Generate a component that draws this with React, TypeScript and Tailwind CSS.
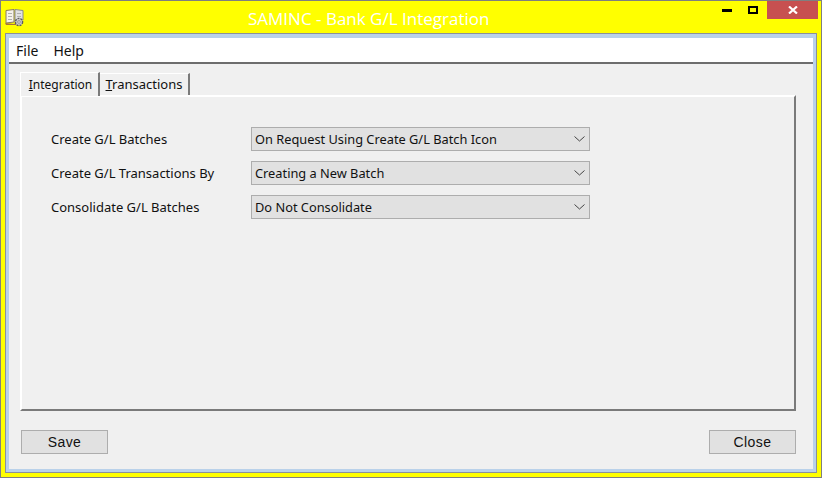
import React from "react";

function Row({ label, value }: { label: string; value: string }) {
  return (
    <div className="flex items-center h-[24px] mb-[10px]">
      <div className="w-[200px] shrink-0 pt-[2px] text-[13px] text-[#111] whitespace-nowrap">{label}</div>
      <div className="w-[339px] h-[24px] flex items-center justify-between bg-[#e1e1e1] border border-[#adadad] pl-[3px] pr-[4px] text-[12.8px] text-[#111] whitespace-nowrap">
        <span className="pt-[1px]">{value}</span>
        <svg width="11" height="6" viewBox="0 0 11 6" fill="none" stroke="#444" strokeWidth="1">
          <path d="M0.5 0.5 L5.5 5 L10.5 0.5" />
        </svg>
      </div>
    </div>
  );
}

function Btn({ label }: { label: string }) {
  return (
    <div className="w-[87px] h-[24px] flex items-center justify-center bg-[#e1e1e1] border border-[#adadad] text-[14px] tracking-[0.4px] font-['Liberation_Sans',sans-serif] text-[#111]">
      {label}
    </div>
  );
}

export default function App() {
  return (
    <div className="w-[822px] h-[478px] bg-[#ffff00] border border-[#7f7f7f] overflow-hidden flex flex-col font-['Noto_Sans','Open_Sans',sans-serif]">
      <div className="h-[32px] shrink-0 flex items-start relative">
        <svg width="20" height="18" viewBox="0 0 20 18" className="ml-[4px] mt-[8px] shrink-0">
          <path d="M1 1.5 L9 0.5 L9 13 L1 14 Z" fill="#f6f3ea" stroke="#8a7a5c" />
          <path d="M10 0.5 L18 1.5 L18 11 L10 13 Z" fill="#e2e2e2" stroke="#8a8a8a" />
          <path d="M0 14 L9 15 L11 14 L12 16 L1 16 Z" fill="#a5733d" />
          <path d="M3 4.5 H7 M3 7.5 H7 M3 10.5 H7 M12 4.5 H16 M12 7.5 H16" stroke="#b0b0b0" />
          <circle cx="14" cy="13" r="3.6" fill="#c8c8c8" stroke="#5c5c5c" strokeWidth="1.4" strokeDasharray="2 1" />
          <circle cx="14" cy="13" r="1.3" fill="#f0f0f0" stroke="#666" strokeWidth="0.6" />
        </svg>
        <div className="absolute left-[247px] top-[7px] text-[17px] leading-[21px] text-white font-['Open_Sans',sans-serif] whitespace-nowrap">
          SAMINC - Bank G/L Integration
        </div>
        <div className="ml-auto flex items-start mr-[3px]">
          <div className="w-[53px] h-[19px] flex items-center justify-end pr-[16px]">
            <div className="w-[10px] h-[3px] bg-black" />
          </div>
          <div className="w-[10px] h-[8px] mt-[5px] border-2 border-black mr-[9px]" />
          <div className="w-[51px] h-[18px] bg-[#c75050] flex items-center justify-center">
            <svg width="10" height="8" viewBox="0 0 10 8">
              <path d="M1 0.5 L9 7.5 M9 0.5 L1 7.5" stroke="#fff" strokeWidth="2.2" />
            </svg>
          </div>
        </div>
      </div>

      <div className="flex-1 mx-[4px] mb-[4px] border border-[#8a9099] bg-[#b9d1ea] p-[3px] pt-[4px] flex min-h-0">
        <div className="flex-1 bg-[#f0f0f0] flex flex-col min-w-0">
          <div className="h-[26px] shrink-0 bg-white border-b-2 border-[#6d6d6d] flex items-center pl-[7px] gap-[15px] text-[14px] text-[#111]">
            <span>File</span>
            <span>Help</span>
          </div>

          <div className="flex-1 px-[11px] pt-[8px] flex flex-col min-h-0">
            <div className="flex items-end h-[24px] shrink-0 relative z-10">
              <div className="h-[24px] w-[80px] bg-[#f0f0f0] border-t border-l border-white border-r-2 border-r-[#7a7a7a] flex items-center justify-center text-[12px] pt-[1px] pl-[2px] text-[#111]">
                <span><span className="underline">I</span>ntegration</span>
              </div>
              <div className="h-[22px] w-[90px] mb-[1px] bg-[#f0f0f0] border-t border-white border-r-2 border-r-[#7a7a7a] flex items-center justify-center text-[13px] pt-[1px] text-[#111]">
                <span><span className="underline">T</span>ransactions</span>
              </div>
            </div>
            <div className="h-[316px] w-[776px] shrink-0 -mt-px border-t-2 border-l-2 border-white border-r-2 border-r-[#7a7a7a] border-b-2 border-b-[#7a7a7a] pt-[30px] pl-[29px]">
              <Row label="Create G/L Batches" value="On Request Using Create G/L Batch Icon" />
              <Row label="Create G/L Transactions By" value="Creating a New Batch" />
              <Row label="Consolidate G/L Batches" value="Do Not Consolidate" />
            </div>
            <div className="flex justify-between w-[776px] mt-[19px] pl-[1px]">
              <Btn label="Save" />
              <Btn label="Close" />
            </div>
          </div>
        </div>
      </div>
    </div>
  );
}
